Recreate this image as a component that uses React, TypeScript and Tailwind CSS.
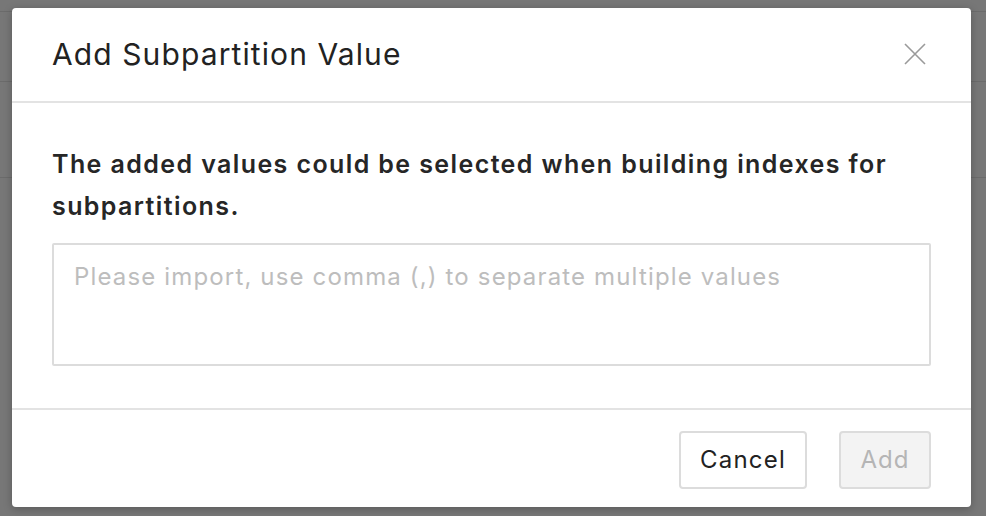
import React, { useState } from 'react';

const App: React.FC = () => {
    const [value, setValue] = useState<string>('');

    return (
        <div className="relative w-[986px] h-[516px] overflow-hidden bg-[#777777]" style={{ fontFamily: 'Inter, "Liberation Sans", sans-serif' }}>
            {/* page behind the mask */}
            <div className="h-[12px] border-b border-[#6b6b6b]" />
            <div className="h-[70px] border-b border-[#6b6b6b]" />
            <div className="h-[96px] border-b border-[#6b6b6b]" />

            <div className="absolute left-[12px] top-[8px] w-[959px] h-[499px] bg-white rounded-[4px] shadow-[0_2px_8px_rgba(0,0,0,0.25)] flex flex-col">
                <div className="h-[95px] shrink-0 flex items-center justify-between pl-[40px] pr-[44px] border-b-2 border-[#e3e3e3]">
                    <h2 className="text-[30px] text-[#222] font-normal tracking-[1.1px]">Add Subpartition Value</h2>
                    <button className="w-[24px] h-[24px] flex items-center justify-center text-[#9a9a9a] -mt-[2px]">
                        <svg width="22" height="22" viewBox="0 0 22 22" fill="none" stroke="currentColor" strokeWidth="1.6">
                            <path d="M1 1 L21 21 M21 1 L1 21" />
                        </svg>
                    </button>
                </div>

                <div className="flex-1 px-[40px] pt-[40px]">
                    <p className="text-[25px] leading-[42px] font-semibold text-[#262626] tracking-[1.4px]">
                        The added values could be selected when building indexes for subpartitions.
                    </p>
                    <textarea
                        value={value}
                        onChange={(e) => setValue(e.target.value)}
                        placeholder="Please import, use comma (,) to separate multiple values"
                        className="mt-[16px] block w-full h-[123px] resize-none border-2 border-[#dcdcdc] rounded-[2px] px-[20px] py-[14px] text-[24px] tracking-[1.15px] text-[#333] placeholder:text-[#bdbdbd] outline-none"
                    />
                </div>

                <div className="h-[99px] shrink-0 border-t-2 border-[#e3e3e3] flex items-start justify-end gap-[32px] pr-[40px] pt-[21px]">
                    <button className="h-[58px] w-[128px] border-2 border-[#dcdcdc] rounded-[4px] bg-white text-[24px] tracking-[1.2px] text-[#222]">
                        Cancel
                    </button>
                    <button disabled className="h-[58px] w-[92px] border-2 border-[#dcdcdc] rounded-[4px] bg-[#f3f3f3] text-[24px] tracking-[1px] text-[#b5b5b5] cursor-not-allowed">
                        Add
                    </button>
                </div>
            </div>
        </div>
    );
};

export default App;
